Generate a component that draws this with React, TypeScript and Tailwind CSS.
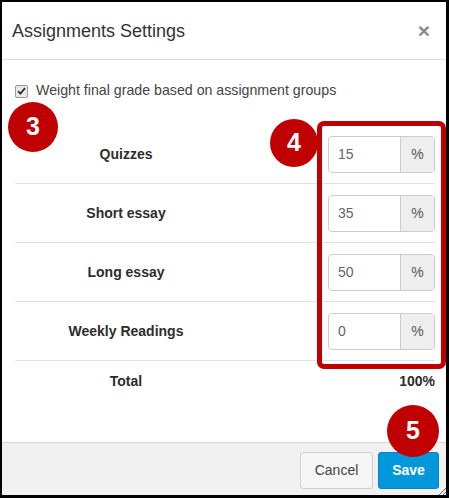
import type { ReactNode } from 'react';

const groups = [
  { label: 'Quizzes', value: '15' },
  { label: 'Short essay', value: '35' },
  { label: 'Long essay', value: '50' },
  { label: 'Weekly Readings', value: '0' }
];

export default function App() {
  return (
    <div className="relative h-[498px] w-[449px] bg-black pb-[3px] pl-[2px] pr-[3px] pt-[2px] font-['Liberation_Sans',Arial,sans-serif] text-[#333]">
      <div className="flex h-full flex-col bg-white">
        <div className="flex h-[58px] items-center justify-between border-b border-[#dcdcdc] pl-[10px] pr-[16px]">
          <h2 className="text-[18px] leading-none text-[#333]">Assignments Settings</h2>
          <span className="text-[21px] font-bold leading-none text-[#8a8a8a]">×</span>
        </div>

        <div className="pl-[13px] pr-[11px] pt-[22px]">
          <label className="flex h-[18px] items-center gap-[8px] text-[14.2px] text-[#444]">
            <CheckBox />
            Weight final grade based on assignment groups
          </label>

          <div className="mt-[25px]">
            {groups.map(group => (
              <div key={group.label} className="flex h-[59px] items-center border-b border-[#dde2e6]">
                <div className="w-[222px] text-center text-[14px] font-bold text-[#2d2d2d]">{group.label}</div>
                <div className="flex flex-1 justify-end">
                  <PercentInput value={group.value} />
                </div>
              </div>
            ))}
            <div className="flex h-[40px] items-center text-[14px] font-bold text-[#2d2d2d]">
              <div className="w-[222px] text-center">Total</div>
              <div className="flex-1 text-right">100%</div>
            </div>
          </div>
        </div>

        <div className="flex-1" />

        <div className="relative flex h-[53px] items-center justify-end gap-[5px] border-t border-[#d6d6d6] bg-[#f1f1f1] pr-[7px] pt-[2px]">
          <button className="h-[37px] w-[73px] rounded-[3px] border border-[#d0d0d0] bg-[#f6f6f6] text-[14px] text-[#444]">Cancel</button>
          <button className="h-[37px] w-[61px] rounded-[3px] border border-[#0a84bf] bg-[#0097db] text-[14px] font-bold text-white">Save</button>
          <svg className="absolute bottom-0 right-0" width="8" height="8" viewBox="0 0 8 8">
            <path d="M1 8 L8 1 M5 8 L8 5" stroke="#666" strokeWidth="1" />
          </svg>
        </div>
      </div>

      {/* annotations */}
      <div className="absolute left-[317px] top-[121px] h-[248px] w-[129px] rounded-[7px] border-[5px] border-[#c00000]" />
      <Badge className="left-[8px] top-[102px] h-[50px] w-[50px]">3</Badge>
      <Badge className="left-[270px] top-[119px] h-[48px] w-[48px]">4</Badge>
      <Badge className="left-[387px] top-[405px] h-[52px] w-[52px]">5</Badge>
    </div>
  );
}

function CheckBox() {
  return (
    <span className="grid h-[13px] w-[13px] place-items-center rounded-[2px] border border-[#9a9a9a] bg-[#e9e9e9]">
      <svg width="9" height="8" viewBox="0 0 9 8">
        <path d="M1 4.2 L3.4 6.6 L8 1.2" fill="none" stroke="#333" strokeWidth="1.8" />
      </svg>
    </span>
  );
}

function PercentInput({ value }: { value: string }) {
  return (
    <div className="flex h-[37px] w-[107px] overflow-hidden rounded-[4px] border border-[#ccc] text-[14px]">
      <div className="flex flex-1 items-center pl-[9px] text-[#666]">{value}</div>
      <div className="grid w-[34px] place-items-center border-l border-[#ccc] bg-[#eee] text-[#555]">%</div>
    </div>
  );
}

function Badge({ className, children }: { className: string; children: ReactNode }) {
  return (
    <div className={`absolute grid place-items-center rounded-full bg-[#c00000] text-[25px] font-bold text-white ${className}`}>
      {children}
    </div>
  );
}
